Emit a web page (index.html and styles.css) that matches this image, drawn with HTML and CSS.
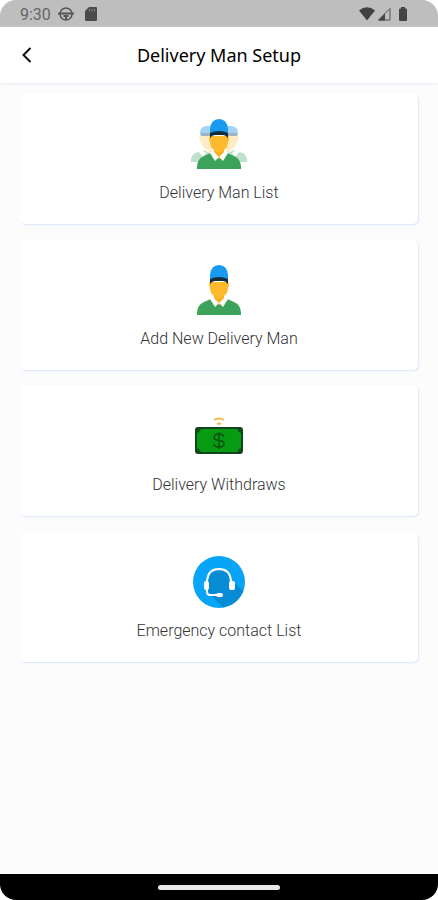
FILE: index.html
```
<!DOCTYPE html>
<html lang="en">
<head>
<meta charset="utf-8">
<meta name="viewport" content="width=device-width, initial-scale=1">
<title>Delivery Man Setup</title>
<link rel="stylesheet" href="styles.css">
</head>
<body>
<div class="phone">
  <div class="status">
    <span class="time">9:30</span>
    <svg width="16" height="16" viewBox="0 0 16 16" fill="none" stroke="#555" aria-hidden="true"><circle cx="8" cy="8" r="6" stroke-width="1.500"/><path d="M0 7.500h16M5.500 10h5M8 10v4" stroke-width="2"/></svg>
    <svg class="sd" width="12" height="14" viewBox="0 0 12 14" aria-hidden="true"><path d="M4 0h7q1 0 1 1v12q0 1-1 1H1q-1 0-1-1V4z" fill="#4a4a4a"/><path d="M4.500 2v2.500M7 2v2.500M9.500 2v2.500" stroke="#888"/></svg>
    <span class="spacer"></span>
    <svg width="16" height="14" viewBox="0 0 16 14" aria-hidden="true"><path d="M0 3.500Q8-3 16 3.500L8 13.500z" fill="#414141"/></svg>
    <svg class="signal" width="14" height="14" viewBox="0 0 14 14" aria-hidden="true"><path d="M1.500 13L13 1.500V13z" fill="none" stroke="#555"/><path d="M1 13.500L8 6.500v7z" fill="#444"/></svg>
    <svg class="battery" width="10" height="14" viewBox="0 0 10 14" aria-hidden="true"><path d="M3 0h4v1.500h1q1 0 1 1V13q0 1-1 1H2q-1 0-1-1V2.500q0-1 1-1h1z" fill="#444"/></svg>
  </div>
  <header class="bar">
    <button class="back" type="button" aria-label="Back"><svg width="10" height="16" viewBox="0 0 10 16" fill="none" stroke="#111" stroke-width="2"><path d="M8.500 1L1.500 8l7 7"/></svg></button>
    <h1>Delivery Man Setup</h1>
  </header>
  <main class="list">
    <a class="card" href="#list">
      <svg width="60" height="52" viewBox="0 0 60 52" aria-hidden="true">
        <g id="side">
          <path d="M2 44v-3q1-6 8-7l5-2 8 4v8z" fill="#bfe0cd"/>
          <path d="M11 17h12v20l-5-5q-5-3-6-8-3-2-1-7z" fill="#feecc6"/>
          <path d="M11 17q-1-8 6-9h7v9z" fill="#a5d3f6"/>
          <path d="M12 15h10v3H12z" fill="#9fb3c0"/>
          <path d="M12 31l5 4-3 4-4-5z" fill="#fff"/>
        </g>
        <use href="#side" transform="translate(60 0) scale(-1 1)"/>
        <g id="man">
          <path d="M8 51v-2q0-8 7-11l9-4h12l9 4q7 3 7 11v2z" fill="#3da35a"/>
          <path d="M25 30h10v7l-5 4-5-4z" fill="#f9ae20"/>
          <path d="M21 18q-2 2 0 6 0 5 4 8 5 5 10 0 4-3 4-8 2-4 0-6z" fill="#fdba2c"/>
          <path d="M24 33l6 6-4 4-5-8zM36 33l-6 6 4 4 5-8z" fill="#fff"/>
          <path d="M21 13h18v7q-2-3-5-3h-8q-3 0-5 3z" fill="#152c3a"/>
          <path d="M21 15v-4Q22 1 30 1t9 10v4q-9-4-18 0z" fill="#189af0"/>
        </g>
      </svg>
      <span>Delivery Man List</span>
    </a>
    <a class="card" href="#add">
      <svg width="60" height="52" viewBox="0 0 60 52" aria-hidden="true"><use href="#man"/></svg>
      <span>Add New Delivery Man</span>
    </a>
    <a class="card" href="#withdraws">
      <svg width="60" height="52" viewBox="0 0 60 52" aria-hidden="true">
        <path d="M25 10q5-3 10 0M28 14q2-1 4 0" fill="none" stroke="#f5b64a" stroke-width="2"/>
        <rect x="7" y="18" width="46" height="25" rx="2" fill="#069b13" stroke="#12451b" stroke-width="2"/>
        <path d="M8 19h4q-1 3-4 4zM52 19h-4q1 3 4 4zM8 42h4q-1-3-4-4zM52 42h-4q1-3 4-4z" fill="#0b5014"/>
        <path d="M35 27q-1-3-5-3t-5 3q0 3 5 3.500t5 3.500q0 3-5 3t-5-3M30 22v17" fill="none" stroke="#07520f" stroke-width="1.500"/>
      </svg>
      <span>Delivery Withdraws</span>
    </a>
    <a class="card" href="#emergency">
      <svg width="60" height="52" viewBox="0 0 60 52" aria-hidden="true">
        <circle cx="30" cy="26" r="26" fill="#08a4f7"/>
        <path d="M43 25L54.500 35Q49 48 34 51.500L19 36V25q2-11 11-11t13 11z" fill="#078bd4"/>
        <path d="M18 27v-2q1-12 12-12t12 12v2M18 33v3q0 3 3 3h8" fill="none" stroke="#fff" stroke-width="2"/>
        <rect x="15" y="25" width="5" height="9" rx="2" fill="#fff"/>
        <rect x="40" y="25" width="6" height="9" rx="2" fill="#fff"/>
        <rect x="27" y="37" width="7" height="4" rx="2" fill="#fff"/>
      </svg>
      <span>Emergency contact List</span>
    </a>
  </main>
  <div class="nav"><span class="handle"></span></div>
</div>
</body>
</html>
```
FILE: styles.css
```
* { box-sizing: border-box; }
body { margin: 0; background: #fff; font-family: Roboto, "Liberation Sans", sans-serif; }
.phone { min-height: 100vh; display: flex; flex-direction: column; background: #fcfcfc; border-radius: 16px; overflow: hidden; }
.status { display: flex; align-items: center; height: 27px; padding: 0 30px 0 20px; background: #bebebe; }
.time { width: 38px; font-size: 16px; line-height: 20px; color: #666; padding-top: 2px; }
.spacer { flex: 1; }
.sd { margin-left: 11px; }
.signal { margin-left: 2px; }
.battery { margin-left: 7px; }
.bar { display: grid; grid-template-columns: 54px 1fr 54px; align-items: center; height: 56px; background: #fff; box-shadow: 0 1px 3px #e6ebf4; }
.back { display: flex; align-items: center; height: 56px; padding: 0 0 0 22px; border: 0; background: none; }
h1 { margin: 0; text-align: center; font: 400 18px/24px "Noto Sans", "Open Sans", sans-serif; color: #000; }
.list { flex: 1; display: flex; flex-direction: column; gap: 16px; padding: 11px 20px; }
.card { display: flex; flex-direction: column; align-items: center; gap: 13px; height: 130px; padding-top: 24px; background: #fff; border-radius: 5px; box-shadow: 1px 1px 2px #d8e6f8; color: #333; text-decoration: none; font-size: 16px; line-height: 20px; font-weight: 300; }
.nav { display: flex; align-items: center; justify-content: center; height: 26px; background: #000; }
.handle { width: 28%; height: 5px; border-radius: 3px; background: #e8e8e8; }
```
